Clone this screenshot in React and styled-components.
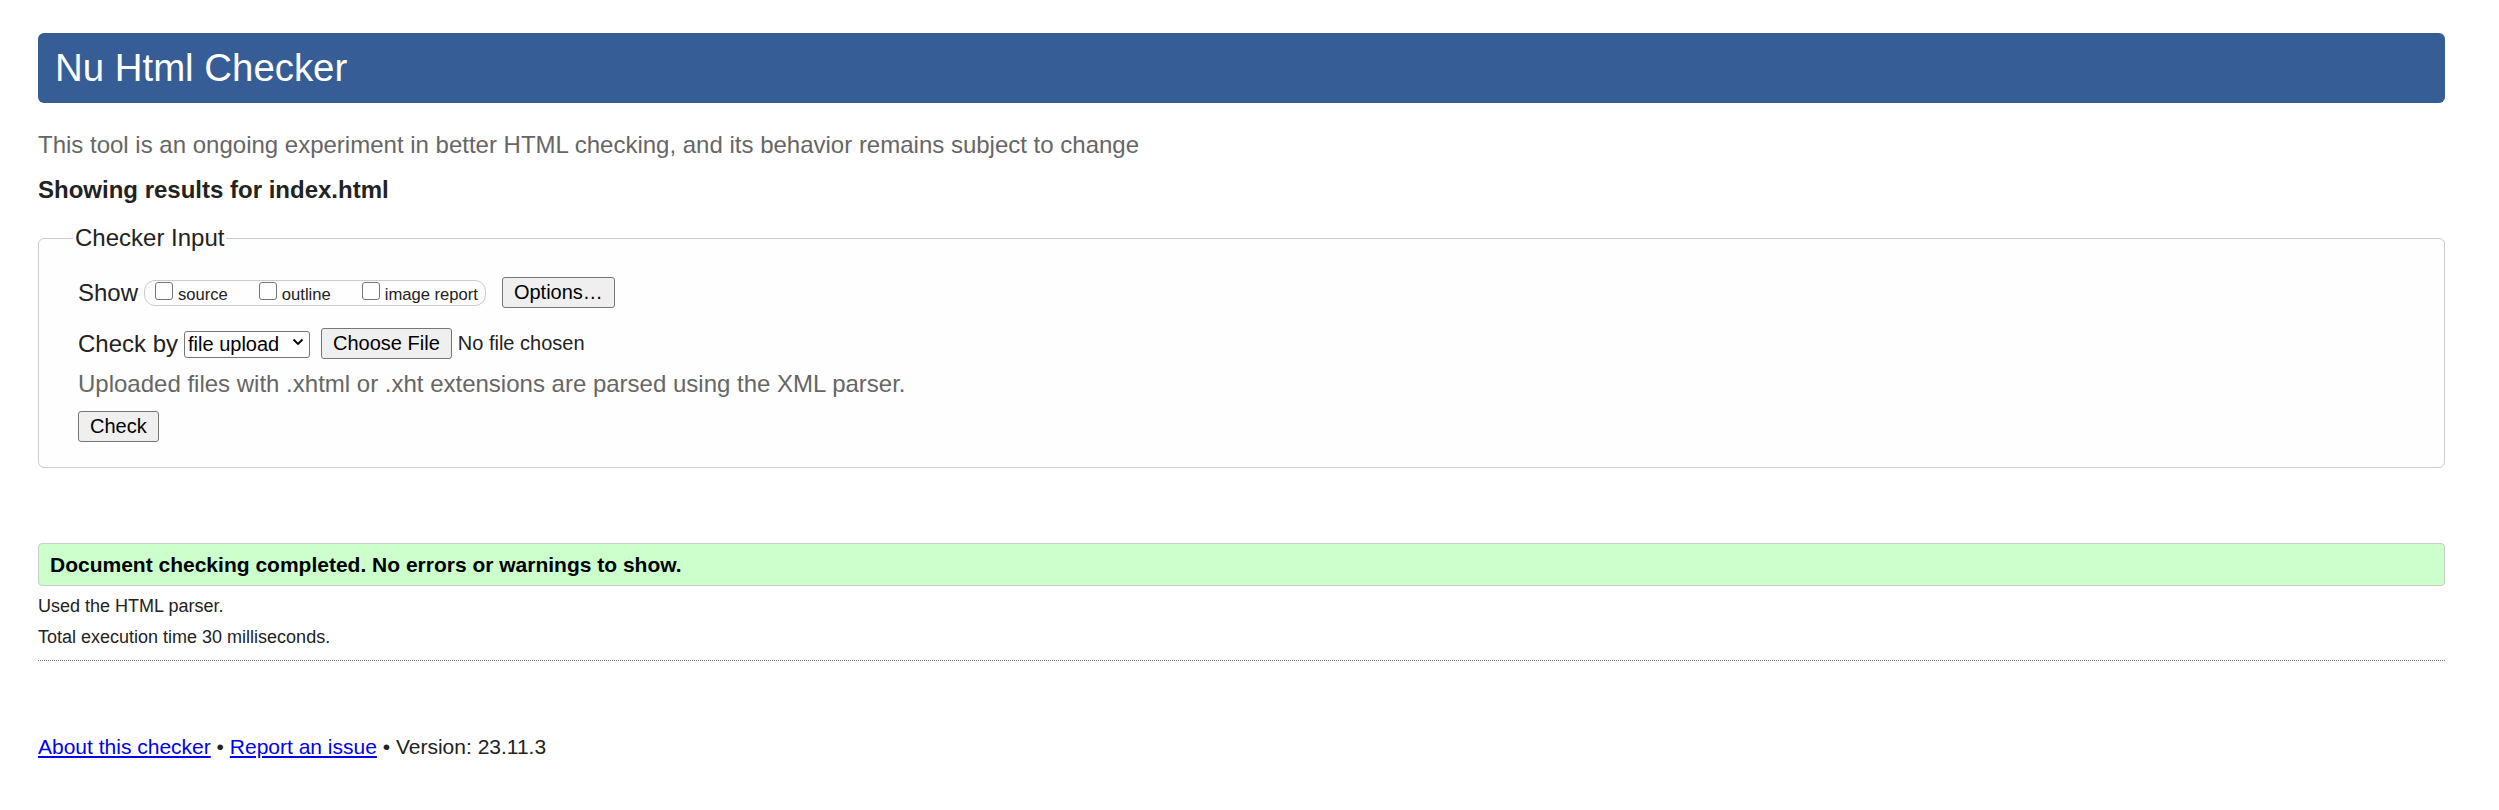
import React from 'react'
import styled, { createGlobalStyle } from 'styled-components'

const GlobalStyle = createGlobalStyle`
  html, body {
    margin: 0;
    padding: 0;
    background: #fff;
  }
  body {
    font-family: "Liberation Sans", Arial, sans-serif;
    font-size: 24px;
    color: #222;
  }
`

const Page = styled.div`
  padding: 0 54px 40px 38px;
`

const Header = styled.h1`
  margin: 33px 0 0;
  padding: 13px 17px;
  background: #365d95;
  color: #fff;
  font-size: 38.4px;
  font-weight: normal;
  line-height: 44px;
  border-radius: 6px;
`

const Intro = styled.p`
  margin: 28px 0 0;
  color: #666;
  line-height: 28px;
`

const Showing = styled.h2`
  margin: 17px 0 0;
  font-size: 24px;
  font-weight: bold;
  line-height: 28px;
  color: #222;
`

const Fieldset = styled.fieldset`
  margin: 20px 0 0;
  padding: 0 39px 25px 39px;
  border: 1px solid #ccc;
  border-radius: 6px;
  background: #fefefe;
`

const Legend = styled.legend`
  margin-left: -5px;
  padding: 0 2px;
  line-height: 28px;
  font-size: 24px;
`

const Row = styled.div`
  display: flex;
  align-items: center;
  height: 31px;
  margin-top: ${p => p.$top}px;
`

const Label = styled.span`
  margin-right: 6px;
`

const Group = styled.div`
  display: flex;
  align-items: flex-start;
  gap: 31px;
  height: 24px;
  padding: 0 7px 0 10px;
  border: 1px solid #ccc;
  border-radius: 11px;
  margin-right: 16px;
`

const Choice = styled.label`
  display: flex;
  align-items: flex-start;
  font-size: 16.6px;
  line-height: 20px;
  padding-top: 4px;
`

const Box = styled.input.attrs({ type: 'checkbox' })`
  appearance: none;
  flex: none;
  width: 18px;
  height: 18px;
  margin: -3px 5px 0 0;
  border: 1px solid #767676;
  border-radius: 3px;
  background: #fff;
`

const Button = styled.button`
  height: 31px;
  padding: 0 11px;
  font-family: "Liberation Sans", Arial, sans-serif;
  font-size: 20px;
  color: #000;
  background: #efefef;
  border: 1px solid #767676;
  border-radius: 3px;
`

const SelectWrap = styled.div`
  position: relative;
  margin-right: 11px;
`

const Select = styled.select`
  appearance: none;
  height: 27px;
  width: 126px;
  padding: 0 22px 0 3px;
  font-family: "Liberation Sans", Arial, sans-serif;
  font-size: 20px;
  color: #000;
  background: #fff;
  border: 1px solid #767676;
  border-radius: 3px;
`

const Chevron = styled.svg`
  position: absolute;
  right: 6px;
  top: 9px;
  pointer-events: none;
`

const FileName = styled.span`
  font-size: 20px;
  margin-left: 6px;
`

const Hint = styled.p`
  margin: 11px 0 0;
  color: #666;
  line-height: 28px;
`

const Success = styled.div`
  margin-top: 75px;
  padding: 0 11px;
  background: #ccffcc;
  border: 1px solid #ccc;
  border-radius: 4px;
  font-size: 21px;
  font-weight: bold;
  line-height: 41px;
  color: #000;
`

const Detail = styled.p`
  margin: 9px 0 0;
  font-size: 18px;
  line-height: 22px;
`

const Rule = styled.hr`
  margin: 12px 0 0;
  border: 0;
  border-top: 1px dotted #777;
  height: 0;
`

const Footer = styled.p`
  margin: 74px 0 0;
  font-size: 21px;
  line-height: 24px;
  a {
    color: #0000ee;
    text-decoration: underline;
  }
`

export default function App() {
  return (
    <Page>
      <GlobalStyle />
      <Header>Nu Html Checker</Header>
      <Intro>
        This tool is an ongoing experiment in better HTML checking, and its behavior remains subject to change
      </Intro>
      <Showing>Showing results for index.html</Showing>

      <Fieldset>
        <Legend>Checker Input</Legend>
        <Row $top={25}>
          <Label>Show</Label>
          <Group>
            <Choice><Box />source</Choice>
            <Choice><Box />outline</Choice>
            <Choice><Box />image report</Choice>
          </Group>
          <Button>Options…</Button>
        </Row>
        <Row $top={20}>
          <Label>Check by</Label>
          <SelectWrap>
            <Select defaultValue="file">
              <option value="file">file upload</option>
              <option value="address">address</option>
              <option value="text">text input</option>
            </Select>
            <Chevron width="12" height="8" viewBox="0 0 12 8">
              <path d="M1.5 1.5 L6 6 L10.5 1.5" fill="none" stroke="#000" strokeWidth="1.8" />
            </Chevron>
          </SelectWrap>
          <Button>Choose File</Button>
          <FileName>No file chosen</FileName>
        </Row>
        <Hint>Uploaded files with .xhtml or .xht extensions are parsed using the XML parser.</Hint>
        <Row $top={13}>
          <Button>Check</Button>
        </Row>
      </Fieldset>

      <Success>Document checking completed. No errors or warnings to show.</Success>
      <Detail>Used the HTML parser.</Detail>
      <Detail>Total execution time 30 milliseconds.</Detail>
      <Rule />

      <Footer>
        <a href="#">About this checker</a> • <a href="#">Report an issue</a> • Version: 23.11.3
      </Footer>
    </Page>
  )
}
